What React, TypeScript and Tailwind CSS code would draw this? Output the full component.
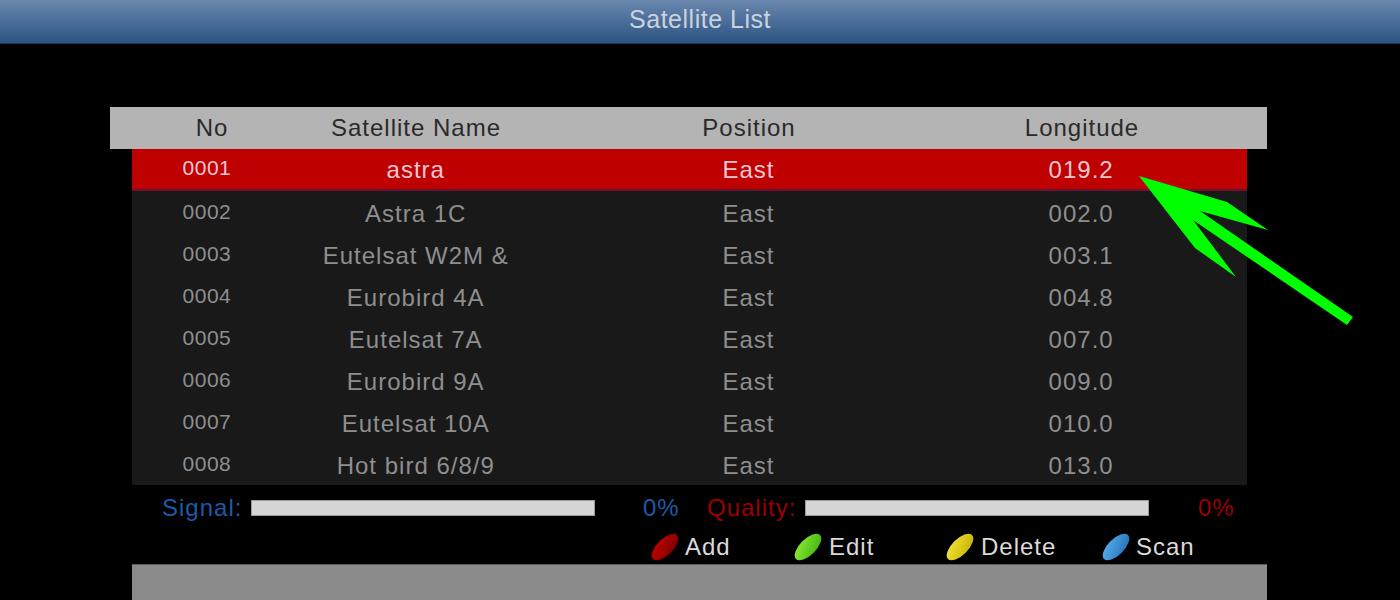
import React from "react";

const rows = [
  { no: "0001", name: "astra", pos: "East", lon: "019.2" },
  { no: "0002", name: "Astra 1C", pos: "East", lon: "002.0" },
  { no: "0003", name: "Eutelsat W2M &", pos: "East", lon: "003.1" },
  { no: "0004", name: "Eurobird 4A", pos: "East", lon: "004.8" },
  { no: "0005", name: "Eutelsat 7A", pos: "East", lon: "007.0" },
  { no: "0006", name: "Eurobird 9A", pos: "East", lon: "009.0" },
  { no: "0007", name: "Eutelsat 10A", pos: "East", lon: "010.0" },
  { no: "0008", name: "Hot bird 6/8/9", pos: "East", lon: "013.0" },
];

function Key({ id, from, to }: { id: string; from: string; to: string }) {
  return (
    <svg width="30" height="30" viewBox="0 0 30 30" className="shrink-0">
      <defs>
        <linearGradient id={id} x1="0" y1="0" x2="1" y2="1">
          <stop offset="0" stopColor={to} />
          <stop offset="1" stopColor={from} />
        </linearGradient>
      </defs>
      <ellipse cx="15" cy="15" rx="17" ry="8" transform="rotate(-45 15 15)" fill={`url(#${id})`} />
    </svg>
  );
}

export default function App() {
  return (
    <div
      className="relative w-[1400px] h-[600px] overflow-hidden bg-black flex flex-col"
      style={{ fontFamily: '"Liberation Sans", Arial, sans-serif' }}
    >
      {/* title bar */}
      <div className="h-[44px] shrink-0 flex items-center justify-center bg-gradient-to-b from-[#6a87ad] to-[#2c5484] border-b border-[#1d3656]">
        <span className="text-[25px] tracking-[0.5px] text-[#c9d3de] -mt-[3px]">Satellite List</span>
      </div>

      {/* header */}
      <div className="mt-[63px] ml-[110px] w-[1157px] h-[42px] flex items-center bg-[#b4b4b4] text-[#2a2a2a] text-[24px] tracking-[1px]">
        <div className="w-[204px] text-center">No</div>
        <div className="w-[204px] text-center">Satellite Name</div>
        <div className="ml-[64px] w-[334px] text-center">Position</div>
        <div className="w-[332px] text-center">Longitude</div>
      </div>

      {/* list */}
      <div className="ml-[132px] w-[1115px] flex flex-col bg-[#191919]">
        {rows.map((r, i) => (
          <div
            key={r.no}
            className={
              i === 0
                ? "h-[42px] pt-[2px] flex items-center bg-[#be0000] text-[#f3c6d0] border-b-2 border-[#6a1434]"
                : "h-[42px] pt-[3px] flex items-center text-[#8e8e8e]"
            }
          >
            <div className="w-[150px] text-center text-[21px] tracking-[0.5px] -mt-[4px]">{r.no}</div>
            <div className="w-[268px] text-center text-[24px] tracking-[1px]">{r.name}</div>
            <div className="ml-[32px] w-[334px] text-center text-[24px] tracking-[1px]">{r.pos}</div>
            <div className="w-[332px] text-center text-[24px] tracking-[1px]">{r.lon}</div>
          </div>
        ))}
      </div>

      {/* signal / quality */}
      <div className="ml-[132px] h-[45px] flex items-center text-[24px] tracking-[1px]">
        <div className="ml-[30px] w-[89px] text-[#1c5aa8]">Signal:</div>
        <div className="w-[344px] h-[16px] bg-[#d6d6d6] border border-[#9a9a9a]" />
        <div className="ml-[48px] w-[64px] text-[#1c5aa8]">0%</div>
        <div className="w-[98px] text-[#9a0000]">Quality:</div>
        <div className="w-[344px] h-[16px] bg-[#d6d6d6] border border-[#9a9a9a]" />
        <div className="ml-[49px] text-[#9a0000]">0%</div>
      </div>

      {/* color keys */}
      <div className="ml-[650px] h-[34px] flex items-center text-[24px] tracking-[1px] text-[#dadada]">
        <div className="w-[143px] flex items-center gap-[5px]">
          <Key id="kr" from="#7a0000" to="#c40000" />
          <span>Add</span>
        </div>
        <div className="w-[152px] flex items-center gap-[6px]">
          <Key id="kg" from="#3fae10" to="#8ef03a" />
          <span>Edit</span>
        </div>
        <div className="w-[156px] flex items-center gap-[6px]">
          <Key id="ky" from="#c4b000" to="#f4e63a" />
          <span>Delete</span>
        </div>
        <div className="flex items-center gap-[5px]">
          <Key id="kb" from="#1f6cb4" to="#5ab4f0" />
          <span>Scan</span>
        </div>
      </div>

      {/* bottom panel */}
      <div className="ml-[132px] w-[1135px] flex-1 bg-[#8b8b8b] border-t border-[#5c5c5c]" />

      {/* annotation arrow */}
      <svg className="absolute inset-0 pointer-events-none" width="1400" height="600">
        <polygon
          fill="#00ff00"
          points="1139,176 1227,202 1268,230 1200,211 1353,317 1347,325 1193,220 1236,277 1195,248"
        />
      </svg>
    </div>
  );
}
